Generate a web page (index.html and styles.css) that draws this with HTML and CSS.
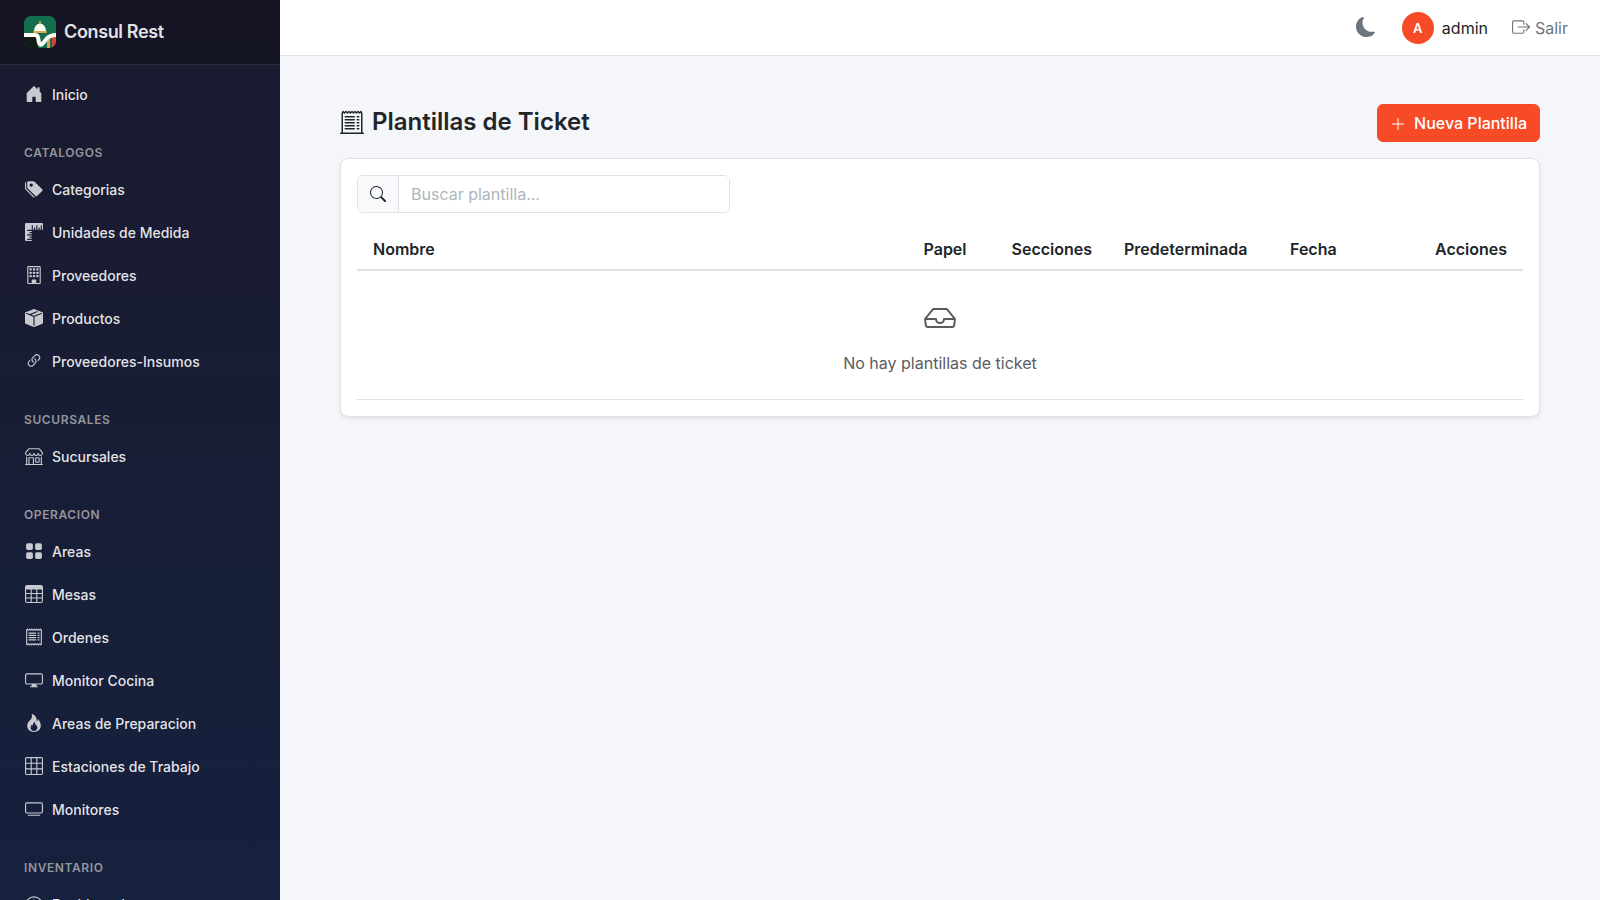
FILE: index.html
```
<!DOCTYPE html>
<html lang="es">
<head>
  <meta charset="UTF-8">
  <meta name="viewport" content="width=device-width, initial-scale=1.0">
  <title>Plantillas de Ticket - Consul Rest</title>
  <link rel="stylesheet" href="styles.css">
</head>
<body>
  <aside class="sidebar">
    <a class="brand" href="#">
      <svg class="brand-logo" viewBox="0 0 32 32" aria-hidden="true">
        <defs><clipPath id="logoClip"><rect width="32" height="32" rx="7"/></clipPath></defs>
        <g clip-path="url(#logoClip)">
          <rect width="32" height="32" fill="#126e4c"/>
          <path d="M0 20h12l2 12H0z" fill="#121a17"/>
          <path d="M23 25l3-3v10h-3z" fill="#dba84c"/>
          <path d="M28 21l4-2v13h-4z" fill="#d0463a"/>
          <path d="M0 19h10.500q3.300 0 3.700 3l.6 4q1 4.500 4 1.500l4-5q3-3.500 10-3.500" fill="none" stroke="#fdfaf1" stroke-width="4"/>
          <path d="M10 15a6 7.500 0 0 1 12 0z" fill="#fdfaf1"/>
          <circle cx="16" cy="6.500" r="1.300" fill="#dba84c"/>
          <rect x="9" y="15" width="14" height="2" rx="1" fill="#dba84c"/>
        </g>
      </svg>
      <span>Consul Rest</span>
    </a>
    <nav class="sidebar-nav">
      <a class="nav-link" href="#">
        <svg class="icon" viewBox="0 0 16 16"><path d="M6.500 14.500v-3.505c0-.245.25-.495.5-.495h2c.25 0 .5.25.5.5v3.500a.5.5 0 0 0 .5.5h4a.5.5 0 0 0 .5-.5v-7a.5.5 0 0 0-.146-.354L13 5.793V2.500a.5.5 0 0 0-.5-.5h-1a.5.5 0 0 0-.5.5v1.293L8.354 1.146a.5.5 0 0 0-.708 0l-6 6A.5.5 0 0 0 1.500 7.500v7a.5.5 0 0 0 .5.5h4a.5.5 0 0 0 .5-.5"/></svg>
        <span>Inicio</span>
      </a>

      <h2 class="nav-section">Catalogos</h2>
      <a class="nav-link" href="#">
        <svg class="icon" viewBox="0 0 16 16"><path d="M2 2a1 1 0 0 1 1-1h4.586a1 1 0 0 1 .707.293l7 7a1 1 0 0 1 0 1.414l-4.586 4.586a1 1 0 0 1-1.414 0l-7-7A1 1 0 0 1 2 6.586zm3.500 4a1.500 1.500 0 1 0 0-3 1.500 1.500 0 0 0 0 3"/><path d="M1.293 7.793A1 1 0 0 1 1 7.086V2a1 1 0 0 0-1 1v4.586a1 1 0 0 0 .293.707l7 7a1 1 0 0 0 1.414 0l.043-.043z"/></svg>
        <span>Categorias</span>
      </a>
      <a class="nav-link" href="#">
        <svg class="icon" viewBox="0 0 16 16"><path d="M1 0a1 1 0 0 0-1 1v14a1 1 0 0 0 1 1h5v-1H2v-1h4v-1H4v-1h2v-1H2v-1h4V9H4V8h2V7H2V6h4V2h1v4h1V4h1v2h1V2h1v4h1V4h1v2h1V2h1v4h1V1a1 1 0 0 0-1-1z"/></svg>
        <span>Unidades de Medida</span>
      </a>
      <a class="nav-link" href="#">
        <svg class="icon" viewBox="0 0 16 16"><path d="M2 1a1 1 0 0 1 1-1h10a1 1 0 0 1 1 1v14a1 1 0 0 1-1 1H3a1 1 0 0 1-1-1zm11 0H3v14h3v-2.500a.5.5 0 0 1 .5-.5h3a.5.5 0 0 1 .5.5V15h3z"/><rect x="4" y="2" width="2" height="2" rx=".5"/><rect x="7" y="2" width="2" height="2" rx=".5"/><rect x="10" y="2" width="2" height="2" rx=".5"/><rect x="4" y="5" width="2" height="2" rx=".5"/><rect x="7" y="5" width="2" height="2" rx=".5"/><rect x="10" y="5" width="2" height="2" rx=".5"/><rect x="4" y="8" width="2" height="2" rx=".5"/><rect x="7" y="8" width="2" height="2" rx=".5"/><rect x="10" y="8" width="2" height="2" rx=".5"/></svg>
        <span>Proveedores</span>
      </a>
      <a class="nav-link" href="#">
        <svg class="icon" viewBox="0 0 16 16"><path fill-rule="evenodd" d="M15.528 2.973a.75.75 0 0 1 .472.696v8.662a.75.75 0 0 1-.472.696l-7.250 2.900a.75.75 0 0 1-.557 0l-7.250-2.900A.75.75 0 0 1 0 12.331V3.669a.75.75 0 0 1 .471-.696L7.443.184l.01-.003.268-.108a.75.75 0 0 1 .558 0l.269.108.01.003zM10.404 2 4.250 4.461 1.846 3.500 1 3.839v.4l6.500 2.600v7.922l.5.2.5-.2V6.840l6.500-2.600v-.4l-.846-.339L8 5.961 5.596 5l6.154-2.461z"/></svg>
        <span>Productos</span>
      </a>
      <a class="nav-link" href="#">
        <svg class="icon" viewBox="0 0 16 16"><path d="M4.715 6.542 3.343 7.914a3 3 0 1 0 4.243 4.243l1.828-1.829A3 3 0 0 0 8.586 5.500L8 6.086a1 1 0 0 0-.154.199 2 2 0 0 1 .861 3.337L6.880 11.450a2 2 0 1 1-2.830-2.830l.793-.792a4 4 0 0 1-.128-1.287z"/><path d="M6.586 4.672A3 3 0 0 0 7.414 9.500l.775-.776a2 2 0 0 1-.896-3.346L9.120 3.550a2 2 0 1 1 2.830 2.830l-.793.792c.112.42.155.855.128 1.287l1.372-1.372a3 3 0 1 0-4.243-4.243z"/></svg>
        <span>Proveedores-Insumos</span>
      </a>

      <h2 class="nav-section">Sucursales</h2>
      <a class="nav-link" href="#">
        <svg class="icon" viewBox="0 0 16 16"><path d="M2.970 1.350A1 1 0 0 1 3.730 1h8.540a1 1 0 0 1 .76.35l2.609 3.044A1.500 1.500 0 0 1 16 5.370v.255a2.375 2.375 0 0 1-4.250 1.458A2.370 2.370 0 0 1 9.875 8 2.370 2.370 0 0 1 8 7.083 2.370 2.370 0 0 1 6.125 8a2.370 2.370 0 0 1-1.875-.917A2.375 2.375 0 0 1 0 5.625V5.370a1.500 1.500 0 0 1 .361-.976zm1.780 4.275a1.375 1.375 0 0 0 2.750 0 .5.5 0 0 1 1 0 1.375 1.375 0 0 0 2.750 0 .5.5 0 0 1 1 0 1.375 1.375 0 1 0 2.750 0V5.370a.5.5 0 0 0-.12-.325L12.270 2H3.730L1.120 5.045A.5.5 0 0 0 1 5.370v.255a1.375 1.375 0 0 0 2.750 0 .5.5 0 0 1 1 0M1.500 8.500A.5.5 0 0 1 2 9v6h1v-5a1 1 0 0 1 1-1h3a1 1 0 0 1 1 1v5h6V9a.5.5 0 0 1 1 0v6h.5a.5.5 0 0 1 0 1H.5a.5.5 0 0 1 0-1H1V9a.5.5 0 0 1 .5-.5M4 15h3v-5H4zm5-5a1 1 0 0 1 1-1h2a1 1 0 0 1 1 1v3a1 1 0 0 1-1 1h-2a1 1 0 0 1-1-1zm3 0h-2v3h2z"/></svg>
        <span>Sucursales</span>
      </a>

      <h2 class="nav-section">Operacion</h2>
      <a class="nav-link" href="#">
        <svg class="icon" viewBox="0 0 16 16"><rect x="1" y="1" width="6" height="6" rx="1.500"/><rect x="9" y="1" width="6" height="6" rx="1.500"/><rect x="1" y="9" width="6" height="6" rx="1.500"/><rect x="9" y="9" width="6" height="6" rx="1.500"/></svg>
        <span>Areas</span>
      </a>
      <a class="nav-link" href="#">
        <svg class="icon" viewBox="0 0 16 16"><path d="M0 2a2 2 0 0 1 2-2h12a2 2 0 0 1 2 2v12a2 2 0 0 1-2 2H2a2 2 0 0 1-2-2zm15 2h-4v3h4zm0 4h-4v3h4zm0 4h-4v3h3a1 1 0 0 0 1-1zm-5 3v-3H6v3zm-5 0v-3H1v2a1 1 0 0 0 1 1zm-4-4h4V8H1zm0-4h4V4H1zm5-3v3h4V4zm4 4H6v3h4z"/></svg>
        <span>Mesas</span>
      </a>
      <a class="nav-link" href="#">
        <svg class="icon" viewBox="0 0 16 16"><path d="M1.920.506a.5.5 0 0 1 .434.14L3 1.293l.646-.647a.5.5 0 0 1 .708 0L5 1.293l.646-.647a.5.5 0 0 1 .708 0L7 1.293l.646-.647a.5.5 0 0 1 .708 0L9 1.293l.646-.647a.5.5 0 0 1 .708 0l.646.647.646-.647a.5.5 0 0 1 .708 0l.646.647.646-.647a.5.5 0 0 1 .801.130l.5 1A.5.5 0 0 1 15 2v12a.5.5 0 0 1-.053.224l-.5 1a.5.5 0 0 1-.8.13L13 14.707l-.646.647a.5.5 0 0 1-.708 0L11 14.707l-.646.647a.5.5 0 0 1-.708 0L9 14.707l-.646.647a.5.5 0 0 1-.708 0L7 14.707l-.646.647a.5.5 0 0 1-.708 0L5 14.707l-.646.647a.5.5 0 0 1-.708 0L3 14.707l-.646.647a.5.5 0 0 1-.801-.13l-.5-1A.5.5 0 0 1 1 14V2a.5.5 0 0 1 .053-.224l.5-1a.5.5 0 0 1 .367-.27m.217 1.338L2 2.118v11.764l.137.274.51-.51a.5.5 0 0 1 .707 0l.646.647.646-.646a.5.5 0 0 1 .708 0l.646.646.646-.646a.5.5 0 0 1 .708 0l.646.646.646-.646a.5.5 0 0 1 .708 0l.646.646.646-.646a.5.5 0 0 1 .708 0l.646.646.646-.646a.5.5 0 0 1 .708 0l.509.509.137-.274V2.118l-.137-.274-.51.51a.5.5 0 0 1-.707 0L12 1.707l-.646.647a.5.5 0 0 1-.708 0L10 1.707l-.646.647a.5.5 0 0 1-.708 0L8 1.707l-.646.647a.5.5 0 0 1-.708 0L6 1.707l-.646.647a.5.5 0 0 1-.708 0L4 1.707l-.646.647a.5.5 0 0 1-.708 0z"/><rect x="3" y="4" width="7" height="1" rx=".5"/><rect x="3" y="6" width="7" height="1" rx=".5"/><rect x="3" y="8" width="7" height="1" rx=".5"/><rect x="3" y="10" width="7" height="1" rx=".5"/><rect x="11" y="4" width="2" height="1" rx=".5"/><rect x="11" y="6" width="2" height="1" rx=".5"/><rect x="11" y="8" width="2" height="1" rx=".5"/><rect x="11" y="10" width="2" height="1" rx=".5"/></svg>
        <span>Ordenes</span>
      </a>
      <a class="nav-link" href="#">
        <svg class="icon" viewBox="0 0 16 16"><path d="M0 4s0-2 2-2h12s2 0 2 2v6s0 2-2 2h-4q0 1 .25 1.500H11a.5.5 0 0 1 0 1H5a.5.5 0 0 1 0-1h.75Q6 13 6 12H2s-2 0-2-2zm1.398-.855a.76.76 0 0 0-.254.302A1.500 1.500 0 0 0 1 4.010V10c0 .325.078.502.145.602q.105.156.302.254a1.500 1.500 0 0 0 .538.143L2.010 11H14c.325 0 .502-.078.602-.145a.76.76 0 0 0 .254-.302 1.500 1.500 0 0 0 .143-.538L15 9.990V4c0-.325-.078-.502-.145-.602a.76.76 0 0 0-.302-.254A1.500 1.500 0 0 0 13.990 3H2c-.325 0-.502.078-.602.145"/></svg>
        <span>Monitor Cocina</span>
      </a>
      <a class="nav-link" href="#">
        <svg class="icon" viewBox="0 0 16 16"><path d="M8 16c3.314 0 6-2 6-5.500 0-1.500-.5-4-2.500-6 .25 1.500-1.250 2-1.250 2C11 4 9 .5 6 0c.357 2 .5 4-2 6-1.250 1-2 2.729-2 4.500C2 14 4.686 16 8 16m0-1c-1.657 0-3-1-3-2.750 0-.75.25-2 1.250-3C6.125 10 7 10.500 7 10.500c-.375-1.250.5-3.250 2-3.500-.179 1-.25 2 1 3 .625.5 1 1.364 1 2.250C11 14 9.657 15 8 15"/></svg>
        <span>Areas de Preparacion</span>
      </a>
      <a class="nav-link" href="#">
        <svg class="icon" viewBox="0 0 16 16"><path d="M0 1.500A1.500 1.500 0 0 1 1.500 0h13A1.500 1.500 0 0 1 16 1.500v13a1.500 1.500 0 0 1-1.500 1.500h-13A1.500 1.500 0 0 1 0 14.500zM1.500 1a.5.5 0 0 0-.5.5V5h4V1zM5 6H1v4h4zm1 4h4V6H6zm-1 1H1v3.500a.5.5 0 0 0 .5.5H5zm1 0v4h4v-4zm5 0v4h3.500a.5.5 0 0 0 .5-.5V11zm0-1h4V6h-4zm0-5h4V1.500a.5.5 0 0 0-.5-.5H11zm-1 0V1H6v4z"/></svg>
        <span>Estaciones de Trabajo</span>
      </a>
      <a class="nav-link" href="#">
        <svg class="icon" viewBox="0 0 16 16"><path d="M2.500 13.500A.5.5 0 0 1 3 13h10a.5.5 0 0 1 0 1H3a.5.5 0 0 1-.5-.5M13.991 3l.024.001a1.500 1.500 0 0 1 .538.143.76.76 0 0 1 .302.254c.067.1.145.277.145.602v5.991l-.001.024a1.500 1.500 0 0 1-.143.538.76.76 0 0 1-.254.302c-.1.067-.277.145-.602.145H2.009l-.024-.001a1.500 1.500 0 0 1-.538-.143.76.76 0 0 1-.302-.254C1.078 10.502 1 10.325 1 10V4.009l.001-.024a1.500 1.500 0 0 1 .143-.538.76.76 0 0 1 .254-.302C1.498 3.078 1.675 3 2 3zM14 2H2C0 2 0 4 0 4v6c0 2 2 2 2 2h12c2 0 2-2 2-2V4c0-2-2-2-2-2"/></svg>
        <span>Monitores</span>
      </a>

      <h2 class="nav-section">Inventario</h2>
      <a class="nav-link" href="#">
        <svg class="icon" viewBox="0 0 16 16"><path fill="none" stroke="currentColor" d="M2.700 14.500a7.500 7.500 0 1 1 10.600 0C10 12.800 6 12.800 2.700 14.500M8 4v2M3 10h2M11 10h2M4.500 6.500l1 1M8 10l3.500-4"/></svg>
        <span>Dashboard</span>
      </a>
    </nav>
  </aside>

  <div class="main">
    <header class="topbar">
      <button class="theme-toggle" type="button" aria-label="Cambiar tema">
        <svg class="moon-icon" viewBox="0 0 16 16"><path d="M6 .278a.77.77 0 0 1 .08.858 7.200 7.200 0 0 0-.878 3.460c0 4.021 3.278 7.277 7.318 7.277q.792-.001 1.533-.16a.79.79 0 0 1 .81.316.73.73 0 0 1-.031.893A8.350 8.350 0 0 1 8.344 16C3.734 16 0 12.286 0 7.710 0 4.266 2.114 1.312 5.124.06A.75.75 0 0 1 6 .278"/></svg>
      </button>
      <div class="user">
        <span class="avatar">A</span>
        <span>admin</span>
      </div>
      <a class="logout" href="#">
        <svg class="logout-icon" viewBox="0 0 16 16"><path d="M10 12.500a.5.5 0 0 1-.5.5h-8a.5.5 0 0 1-.5-.5v-9a.5.5 0 0 1 .5-.5h8a.5.5 0 0 1 .5.5v2a.5.5 0 0 0 1 0v-2A1.500 1.500 0 0 0 9.500 2h-8A1.500 1.500 0 0 0 0 3.500v9A1.500 1.500 0 0 0 1.500 14h8a1.500 1.500 0 0 0 1.500-1.500v-2a.5.5 0 0 0-1 0z"/><path d="M15.854 8.354a.5.5 0 0 0 0-.708l-3-3a.5.5 0 0 0-.708.708L14.293 7.500H5.500a.5.5 0 0 0 0 1h8.793l-2.147 2.146a.5.5 0 0 0 .708.708z"/></svg>
        <span>Salir</span>
      </a>
    </header>

    <main class="content">
      <div class="page-header">
        <h1>
          <svg class="title-icon" viewBox="0 0 16 16"><path d="M2.354.646a.5.5 0 0 0-.801.130l-.5 1A.5.5 0 0 0 1 2v13H.5a.5.5 0 0 0 0 1h15a.5.5 0 0 0 0-1H15V2a.5.5 0 0 0-.053-.224l-.5-1a.5.5 0 0 0-.8-.13L13 1.293l-.646-.647a.5.5 0 0 0-.708 0L11 1.293l-.646-.647a.5.5 0 0 0-.708 0L9 1.293 8.354.646a.5.5 0 0 0-.708 0L7 1.293 6.354.646a.5.5 0 0 0-.708 0L5 1.293 4.354.646a.5.5 0 0 0-.708 0L3 1.293zm-.217 1.198.51.51a.5.5 0 0 0 .707 0L4 1.707l.646.647a.5.5 0 0 0 .708 0L6 1.707l.646.647a.5.5 0 0 0 .708 0L8 1.707l.646.647a.5.5 0 0 0 .708 0L10 1.707l.646.647a.5.5 0 0 0 .708 0L12 1.707l.646.647a.5.5 0 0 0 .708 0l.509-.51.137.274V15H2V2.118z"/><rect x="3" y="4" width="7" height="1" rx=".5"/><rect x="3" y="6" width="7" height="1" rx=".5"/><rect x="3" y="8" width="7" height="1" rx=".5"/><rect x="3" y="10" width="7" height="1" rx=".5"/><rect x="3" y="12" width="7" height="1" rx=".5"/><rect x="11" y="4" width="2" height="1" rx=".5"/><rect x="11" y="6" width="2" height="1" rx=".5"/><rect x="11" y="8" width="2" height="1" rx=".5"/><rect x="11" y="10" width="2" height="1" rx=".5"/><rect x="11" y="12" width="2" height="1" rx=".5"/></svg>
          <span>Plantillas de Ticket</span>
        </h1>
        <button class="btn-primary" type="button">
          <svg class="btn-icon" viewBox="0 0 16 16"><path d="M8 2a.5.5 0 0 1 .5.5v5h5a.5.5 0 0 1 0 1h-5v5a.5.5 0 0 1-1 0v-5h-5a.5.5 0 0 1 0-1h5v-5A.5.5 0 0 1 8 2"/></svg>
          <span>Nueva Plantilla</span>
        </button>
      </div>

      <section class="card">
        <div class="search-group">
          <label class="search-label" for="searchInput" aria-label="Buscar">
            <svg class="search-icon" viewBox="0 0 16 16"><path d="M11.742 10.344a6.500 6.500 0 1 0-1.397 1.398h-.001q.044.06.098.115l3.850 3.850a1 1 0 0 0 1.415-1.414l-3.850-3.850a1 1 0 0 0-.115-.1zM12 6.500a5.500 5.500 0 1 1-11 0 5.500 5.500 0 0 1 11 0"/></svg>
          </label>
          <input class="search-input" type="text" id="searchInput" placeholder="Buscar plantilla...">
        </div>
        <table class="table">
          <thead>
            <tr>
              <th>Nombre</th>
              <th class="col-papel">Papel</th>
              <th class="col-secciones">Secciones</th>
              <th class="col-default">Predeterminada</th>
              <th class="col-fecha">Fecha</th>
              <th class="col-acciones">Acciones</th>
            </tr>
          </thead>
          <tbody>
            <tr>
              <td class="empty" colspan="6">
                <svg class="empty-icon" viewBox="0 0 16 16"><path d="M4.980 4a.5.5 0 0 0-.39.188L1.540 8H6a.5.5 0 0 1 .5.5 1.500 1.500 0 1 0 3 0A.5.5 0 0 1 10 8h4.460l-3.050-3.812A.5.5 0 0 0 11.020 4zm9.954 5H10.450a2.500 2.500 0 0 1-4.900 0H1.066l.32 2.562a.5.5 0 0 0 .497.438h12.234a.5.5 0 0 0 .496-.438zM3.809 3.563A1.500 1.500 0 0 1 4.981 3h6.038a1.500 1.500 0 0 1 1.172.563l3.700 4.625a.5.5 0 0 1 .105.374l-.39 3.124A1.500 1.500 0 0 1 14.117 13H1.883a1.500 1.500 0 0 1-1.489-1.314l-.39-3.124a.5.5 0 0 1 .106-.374z"/></svg>
                <p>No hay plantillas de ticket</p>
              </td>
            </tr>
          </tbody>
        </table>
      </section>
    </main>
  </div>
</body>
</html>
```
FILE: styles.css
```
* {
  box-sizing: border-box;
}

body {
  font-family: Inter, "Liberation Sans", sans-serif;
  font-size: 16px;
  line-height: 24px;
  margin: 0;
  height: 100vh;
  display: flex;
  overflow: hidden;
  background: #f4f6fa;
  color: #212529;
}

h1, h2, p {
  margin: 0;
}

a {
  text-decoration: none;
}

button, input {
  font: inherit;
}

svg {
  fill: currentColor;
  flex-shrink: 0;
}

/* Sidebar */
.sidebar {
  width: 280px;
  flex-shrink: 0;
  display: flex;
  flex-direction: column;
  background: linear-gradient(180deg, #1a1a2e 0%, #16213e 100%);
}

.brand {
  display: flex;
  align-items: center;
  gap: 8px;
  padding: 16px 24px;
  flex-shrink: 0;
  background: rgba(0, 0, 0, 0.2);
  border-bottom: 1px solid rgba(255, 255, 255, 0.1);
  color: rgba(255, 255, 255, 0.9);
  font-size: 18px;
  font-weight: 600;
  line-height: 32px;
  letter-spacing: -0.02em;
}

.brand-logo {
  width: 32px;
  height: 32px;
}

.sidebar-nav {
  flex: 1;
  min-height: 0;
  padding-top: 8px;
  overflow-y: auto;
  scrollbar-width: none;
}

.nav-link {
  display: flex;
  align-items: center;
  gap: 8px;
  height: 43px;
  padding: 0 24px;
  color: rgba(255, 255, 255, 0.9);
  font-size: 14px;
  font-weight: 500;
}

.icon {
  width: 20px;
  height: 18px;
  margin-bottom: 2px;
  opacity: 0.85;
}

.nav-section {
  padding: 28px 24px 6px;
  color: #95959b;
  font-size: 12px;
  font-weight: 600;
  line-height: 18px;
  letter-spacing: 0.05em;
  text-transform: uppercase;
}

/* Top bar */
.main {
  flex: 1;
  min-width: 0;
  display: flex;
  flex-direction: column;
}

.topbar {
  height: 56px;
  flex-shrink: 0;
  display: flex;
  align-items: center;
  justify-content: flex-end;
  gap: 24px;
  padding: 0 32px;
  background: #fff;
  border-bottom: 1px solid #dee2e6;
}

.theme-toggle {
  display: flex;
  padding: 0 2px 2px;
  border: none;
  background: none;
  color: #6c757d;
  cursor: pointer;
}

.moon-icon {
  width: 20px;
  height: 20px;
}

.user {
  display: flex;
  align-items: center;
  gap: 8px;
}

.avatar {
  width: 32px;
  height: 32px;
  border-radius: 50%;
  background: #f74b27;
  color: #fff;
  font-size: 13px;
  font-weight: 600;
  line-height: 32px;
  text-align: center;
}

.logout {
  display: flex;
  align-items: center;
  gap: 5px;
  color: #6c757d;
}

.logout-icon {
  width: 18px;
  height: 18px;
  margin-bottom: 2px;
}

/* Page */
.content {
  padding: 48px 60px;
}

.page-header {
  display: flex;
  align-items: center;
  justify-content: space-between;
  margin-bottom: 16px;
}

.page-header h1 {
  display: flex;
  align-items: center;
  gap: 8px;
  padding-bottom: 2px;
  font-size: 24px;
  font-weight: 600;
  line-height: 28px;
}

.title-icon {
  width: 24px;
  height: 24px;
}

.btn-primary {
  display: flex;
  align-items: center;
  gap: 8px;
  padding: 6px 12px;
  border: 1px solid #f74b27;
  border-radius: 6px;
  background: #f74b27;
  color: #fff;
  font-weight: 500;
  cursor: pointer;
}

.btn-icon {
  width: 16px;
  height: 16px;
  margin-top: 2px;
}

.card {
  padding: 16px;
  background: #fff;
  border: 1px solid #dee2e6;
  border-radius: 8px;
  box-shadow: 0 2px 4px rgba(0, 0, 0, 0.075);
}

.search-group {
  display: flex;
  width: 32%;
  margin-bottom: 16px;
  border: 1px solid #dee2e6;
  border-radius: 6px;
  overflow: hidden;
}

.search-label {
  display: flex;
  align-items: center;
  padding: 0 12px;
  background: #f8f9fa;
  border-right: 1px solid #dee2e6;
}

.search-icon {
  width: 16px;
  height: 16px;
}

.search-input {
  flex: 1;
  min-width: 0;
  padding: 6px 12px;
  border: none;
  outline: none;
  background: #fff;
  color: #212529;
}

.search-input::placeholder {
  color: #adb5bd;
}

.table {
  width: 100%;
  border-collapse: separate;
  border-spacing: 0;
}

.table th {
  padding: 8px 16px;
  border-bottom: 2px solid #dee2e6;
  font-weight: 600;
  text-align: left;
  white-space: nowrap;
}

.table .col-papel {
  width: 88px;
}

.table .col-secciones {
  width: 112px;
}

.table .col-default {
  width: 166px;
}

.table .col-fecha {
  width: 119px;
}

.table .col-acciones {
  width: 130px;
  text-align: right;
}

.table .empty {
  padding: 31px 16px 24px;
  border-bottom: 1px solid #dee2e6;
  color: #595c5f;
  text-align: center;
}

.empty-icon {
  display: block;
  width: 32px;
  height: 32px;
  margin: 0 auto 17px;
}

@media (max-width: 900px) {
  .sidebar {
    display: none;
  }

  .content {
    padding: 24px 16px;
  }

  .search-group {
    width: 100%;
  }

  .card {
    overflow-x: auto;
  }
}
```
